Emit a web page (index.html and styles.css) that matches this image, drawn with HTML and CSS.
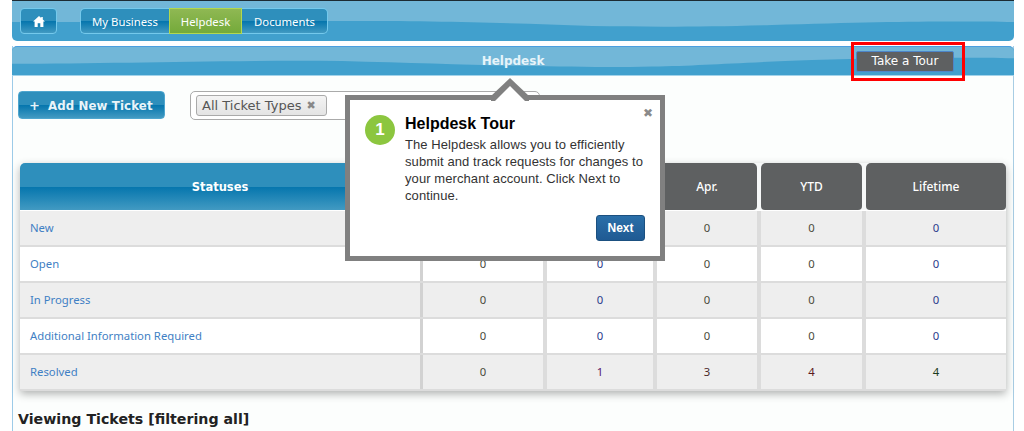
FILE: index.html
```html
<!DOCTYPE html>
<html lang="en">
<head>
<meta charset="utf-8">
<title>Helpdesk</title>
<link rel="stylesheet" href="styles.css">
</head>
<body>
<div class="page">
  <nav class="topnav">
    <svg class="wave" viewBox="0 0 1002 40" preserveAspectRatio="none"><path d="M0 0H1002V21C950 20 880 20 760 24C690 26 640 26 580 25C500 22 430 20 330 20C200 20 100 21 0 21Z" fill="#72b7d8"/></svg>
    <a class="btn home" aria-label="Home">
      <svg width="12" height="11" viewBox="0 0 12 11"><path d="M6 0L8.2 2V1H9.8V3.5L12 5.6H10.4V11H7.3V7.2H4.7V11H1.6V5.6H0Z" fill="#fff"/></svg>
    </a>
    <div class="tabs">
      <a class="tab tab-first">My Business</a>
      <a class="tab tab-active">Helpdesk</a>
      <a class="tab tab-last">Documents</a>
    </div>
  </nav>

  <main class="panel">
    <header class="panel-head">
      <svg class="wave" viewBox="0 0 1002 30" preserveAspectRatio="none"><path d="M0 0H1002V12C960 11 880 11 800 14C720 17 690 20 640 21C560 23 470 19 330 15C200 14 100 18 0 18Z" fill="#72b7d8"/></svg>
      <span></span>
      <h1 class="panel-title">Helpdesk</h1>
      <div class="tour-wrap"><button class="tour-btn">Take a Tour</button></div>
    </header>

    <div class="panel-body">
      <div class="toolbar">
        <button class="add-btn"><span class="plus">+</span>Add New Ticket</button>
        <div class="select-box">
          <span class="tag">All Ticket Types <b class="tag-x">✖</b></span>
        </div>
      </div>

      <div class="stats">
        <div class="row head">
          <div class="cell th-blue">Statuses</div>
          <div class="cell th"></div>
          <div class="cell th"></div>
          <div class="cell th">Apr.</div>
          <div class="cell th">YTD</div>
          <div class="cell th">Lifetime</div>
        </div>
        <div class="row alt">
          <div class="cell name"><a>New</a></div>
          <div class="cell num">0</div><div class="cell num navy">0</div><div class="cell num">0</div><div class="cell num">0</div><div class="cell num navy">0</div>
        </div>
        <div class="row">
          <div class="cell name"><a>Open</a></div>
          <div class="cell num">0</div><div class="cell num navy">0</div><div class="cell num">0</div><div class="cell num">0</div><div class="cell num navy">0</div>
        </div>
        <div class="row alt">
          <div class="cell name"><a>In Progress</a></div>
          <div class="cell num">0</div><div class="cell num navy">0</div><div class="cell num">0</div><div class="cell num">0</div><div class="cell num navy">0</div>
        </div>
        <div class="row">
          <div class="cell name"><a>Additional Information Required</a></div>
          <div class="cell num">0</div><div class="cell num navy">0</div><div class="cell num">0</div><div class="cell num">0</div><div class="cell num navy">0</div>
        </div>
        <div class="row alt last">
          <div class="cell name"><a>Resolved</a></div>
          <div class="cell num">0</div><div class="cell num plum">1</div><div class="cell num maroon">3</div><div class="cell num red">4</div><div class="cell num green">4</div>
        </div>
      </div>

      <h2 class="viewing">Viewing Tickets [filtering all]</h2>
    </div>
  </main>

  <div class="tour-highlight"></div>

  <aside class="popup">
    <svg class="popup-arrow" width="38" height="23" viewBox="0 0 38 23"><path d="M0 18L19 0L38 18V23H0Z" fill="#808080"/><path d="M4 23L19 8L34 23Z" fill="#fff"/></svg>
    <span class="popup-close">✖</span>
    <div class="popup-main">
      <span class="step">1</span>
      <div class="popup-text">
        <h3 class="popup-title">Helpdesk Tour</h3>
        <p class="popup-copy">The Helpdesk allows you to efficiently submit and track requests for changes to your merchant account. Click Next to continue.</p>
      </div>
    </div>
    <div class="popup-actions"><button class="next-btn">Next</button></div>
  </aside>
</div>
</body>
</html>
```
FILE: styles.css
```css
* { box-sizing: border-box; }
html, body { margin: 0; height: 100%; overflow: hidden; background: #fff; }
body { font-family: "DejaVu Sans", sans-serif; }
.page { position: relative; width: 1024px; height: 431px; overflow: hidden; padding: 0 10px 0 12px; }

.wave { position: absolute; inset: 0; width: 100%; height: 100%; display: block; }

.topnav {
  position: relative; display: flex; align-items: flex-start; gap: 23px;
  height: 41px; padding: 7px 0 0 8px;
  background: #41a0cd; border-top: 1px solid #1c2b33;
  border-radius: 0 0 5px 5px; overflow: hidden;
}
.btn, .tab {
  position: relative; display: flex; align-items: center; justify-content: center;
  height: 26px; color: #fff; font: 11.3px "Noto Sans", sans-serif;
  background: linear-gradient(#2e8fbc 0 50%, #0475ad 50%, #429ac2 100%);
  border: 1px solid #74c9ec;
}
.home { width: 37px; border-radius: 4px; }
.tabs { position: relative; display: flex; }
.tab-first { width: 89px; border-radius: 5px 0 0 5px; border-right: 0; }
.tab-active { width: 73px; background: linear-gradient(#8fb853, #74aa3a); border-color: #b3d84f; }
.tab-last { width: 86px; border-radius: 0 5px 5px 0; border-left: 0; }

.panel {
  margin-top: 5px; height: 390px;
  border-left: 1px solid #9ccbe8; border-right: 1px solid #a8cde4;
  background: #fcfefd;
}
.panel-head {
  position: relative; display: grid; grid-template-columns: 1fr auto 1fr; align-items: center;
  margin: 0 -1px; height: 30px;
  background: #41a0cd; border-top: 1px solid #4a9fe0; border-bottom: 1px solid #a3d3ea;
  border-radius: 5px 5px 0 0; overflow: hidden;
}
.panel-title { position: relative; margin: 0; font-size: 12px; font-weight: 700; color: #e6f4fa; }
.tour-wrap { position: relative; display: flex; justify-content: flex-end; padding-right: 60px; }
.tour-btn {
  width: 98px; height: 21px; padding: 0; font: 12px "DejaVu Sans", sans-serif; color: #fff;
  background: #5e6061; border: 1px solid #4d85c9; border-radius: 2px;
}
.tour-highlight {
  position: absolute; left: 851px; top: 42px; width: 114px; height: 39px;
  border: 3px solid #f00;
}

.panel-body { padding: 15px 7px 0 5px; }
.toolbar { display: flex; align-items: flex-start; gap: 25px; height: 72px; }
.add-btn {
  width: 147px; height: 28px; padding: 1px 0 0 10px; display: flex; align-items: center; gap: 8px; white-space: nowrap;
  font: 700 11.8px "DejaVu Sans", sans-serif; letter-spacing: .1px; color: #e9f4f9;
  background: linear-gradient(#2e8fbc 0 50%, #0475ad 50%, #429ac2 100%);
  border: 1px solid #4ea6cf; border-radius: 4px;
}
.plus { font-size: 13px; line-height: 1; }
.select-box {
  width: 350px; height: 29px; padding: 3px 5px; margin-top: 0;
  background: #fff; border: 1px solid #aaa; border-radius: 5px;
}
.tag {
  display: inline-flex; align-items: center; gap: 5px; height: 21px; padding: 0 5px;
  width: 131px; font-size: 13px; color: #555; white-space: nowrap;
  background: linear-gradient(#f4f4f4, #e4e4e4); border: 1px solid #aaa; border-radius: 3px;
}
.tag-x { font-size: 11px; color: #888; }

.stats { margin-left: 2px; width: 986px; box-shadow: 0 3px 8px rgba(0,0,0,.3); border-radius: 5px 5px 0 0; }
.row { display: grid; grid-template-columns: 403px 124px 110px 104px 105px 140px; height: 36px; background: #fff; border-bottom: 2px solid #dcdcdc; }
.row.alt { background: #eee; }
.row.head { height: 48px; background: #f6f8f8; border-bottom: 1px solid #fff; }
.cell { display: flex; align-items: center; justify-content: center; padding-bottom: 2px; font: 11.3px "Noto Sans", sans-serif; border-right: 4px solid #dcdcdc; color: #444; }
.cell:first-child { border-right: 3px solid #d2d2d2; }
.cell:last-child { border-right: 0; }
.th-blue, .th { border: 0 !important; color: #fff; padding-bottom: 0; }
.th-blue {
  margin-right: 3px; font: 700 11.5px "DejaVu Sans", sans-serif;
  background: linear-gradient(#2e8fbc 0 50%, #0475ad 50%, #429ac2 100%);
  border-radius: 5px 0 0 0 !important;
}
.th { background: #5e6061; margin-right: 4px; border-radius: 5px 5px 4px 4px; font-size: 12px; font-weight: 500; }
.th:last-child { margin-right: 0; }
.name { justify-content: flex-start; padding-left: 10px; }
.name a { color: #3f7fc4; }
.num { color: #4a4a3a; }
.navy { color: #2b3a8c; }
.plum { color: #5a1a6a; }
.maroon { color: #4a2a2a; }
.red { color: #5a1a20; }
.green { color: #1a3a20; }

.viewing { margin: 20px 0 0; font-size: 14.2px; font-weight: 700; color: #222; }

.popup {
  position: absolute; left: 345px; top: 95px; width: 320px; height: 166px;
  padding: 15px 15px 0 15px; background: #fff; border: 5px solid #808080;
  font-family: "Liberation Sans", sans-serif;
}
.popup-arrow { position: absolute; left: 141px; top: -22px; display: block; }
.popup-close { position: absolute; right: 7px; top: 7px; font-size: 12px; line-height: 1; color: #8a8a8a; font-family: "DejaVu Sans", sans-serif; }
.popup-main { display: flex; gap: 10px; }
.step {
  flex: none; display: flex; align-items: center; justify-content: center;
  width: 30px; height: 30px; border-radius: 50%; background: #8cc63f; color: #fff; font-weight: 700; font-size: 17px;
}
.popup-title { margin: -1px 0 2px; font-size: 16px; line-height: 20px; font-weight: 700; color: #000; }
.popup-copy { margin: 0; font-size: 13px; line-height: 17px; color: #333; width: 250px; letter-spacing: .08px; }
.popup-actions { display: flex; justify-content: flex-end; margin: 11px 0 0; }
.next-btn {
  width: 49px; height: 26px; padding: 0; font: 700 12px "Liberation Sans", sans-serif; color: #fff;
  background: linear-gradient(#2a6fa9, #1f5a93); border: 1px solid #1b5080; border-radius: 3px;
}
```
